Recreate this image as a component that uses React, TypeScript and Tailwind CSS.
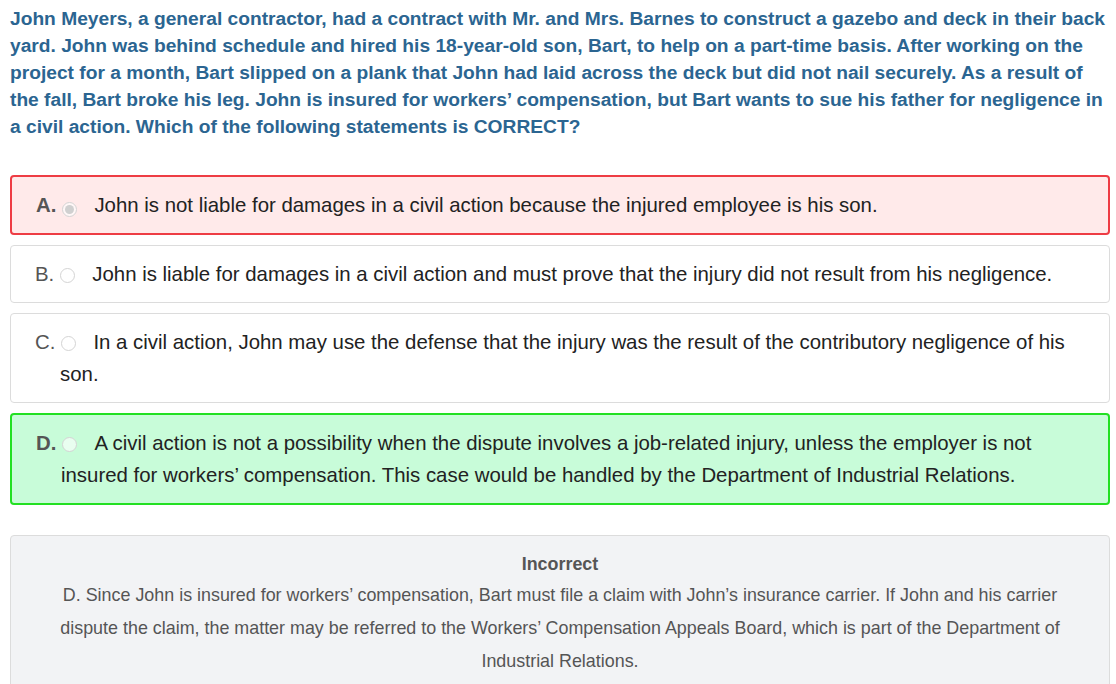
const question =
  'John Meyers, a general contractor, had a contract with Mr. and Mrs. Barnes to construct a gazebo and deck in their back yard. John was behind schedule and hired his 18-year-old son, Bart, to help on a part-time basis. After working on the project for a month, Bart slipped on a plank that John had laid across the deck but did not nail securely. As a result of the fall, Bart broke his leg. John is insured for workers\u2019 compensation, but Bart wants to sue his father for negligence in a civil action. Which of the following statements is CORRECT?';

interface IOption {
  letter: string;
  text: string;
  state?: 'wrong' | 'right';
  checked?: boolean;
}

const options: IOption[] = [
  {
    letter: 'A.',
    text: 'John is not liable for damages in a civil action because the injured employee is his son.',
    state: 'wrong',
    checked: true,
  },
  {
    letter: 'B.',
    text: 'John is liable for damages in a civil action and must prove that the injury did not result from his negligence.',
  },
  {
    letter: 'C.',
    text: 'In a civil action, John may use the defense that the injury was the result of the contributory negligence of his son.',
  },
  {
    letter: 'D.',
    text: 'A civil action is not a possibility when the dispute involves a job-related injury, unless the employer is not insured for workers\u2019 compensation. This case would be handled by the Department of Industrial Relations.',
    state: 'right',
  },
];

function Radio ({ checked }: { checked?: boolean }) {
  return (
    <span className="inline-flex items-center justify-center w-[15px] h-[15px] rounded-full border border-[#d4d4d4] bg-white/60 align-[-2px] mx-[6px]">
      {checked && <span className="w-[9px] h-[9px] rounded-full bg-[#d0d0d0]" />}
    </span>
  );
}

function OptionCard ({ option }: { option: IOption }) {
  let box = 'border border-[#dcdcdc] bg-white py-[12px]';
  if (option.state === 'wrong') box = 'border-2 border-[#ee3c44] bg-[#ffeaea] py-[12px]';
  if (option.state === 'right') box = 'border-2 border-[#22e022] bg-[#c8fcd9] py-[12px]';
  const marked = option.state !== undefined;

  return (
    <div className={`rounded-[4px] pl-[49px] pr-[40px] mb-[10px] ${box}`}>
      <p className="-indent-[25px] text-[20.4px] leading-[32px] text-[#222]">
        <span className={marked ? 'font-bold text-[#555]' : 'text-[#555]'}>{option.letter}</span>
        <Radio checked={option.checked} />
        <span className="ml-[11px]">{option.text}</span>
      </p>
    </div>
  );
}

export default function App () {
  return (
    <div className="w-[1116px] h-[684px] overflow-hidden bg-white font-['Liberation_Sans',Arial,sans-serif]">
      <div className="w-[1100px] ml-[10px]">
        <p className="pt-[5px] text-[19.2px] leading-[27px] font-bold text-[#2b6591]">
          {question}
        </p>
        <div className="mt-[35px]">
          {options.map((option) => (
            <OptionCard key={option.letter} option={option} />
          ))}
        </div>
        <section className="mt-[30px] rounded-[4px] border border-[#dcdcdc] bg-[#f2f3f5] pt-[13px] pb-[20px] px-[40px] text-center">
          <div className="text-[17.9px] leading-[30px] font-bold text-[#555]">Incorrect</div>
          <p className="text-[17.9px] leading-[33px] text-[#555]">
            D. Since John is insured for workers&#8217; compensation, Bart must file a claim with John&#8217;s insurance carrier. If John and his carrier dispute the claim, the matter may be referred to the Workers&#8217; Compensation Appeals Board, which is part of the Department of Industrial Relations.
          </p>
        </section>
      </div>
    </div>
  );
}
